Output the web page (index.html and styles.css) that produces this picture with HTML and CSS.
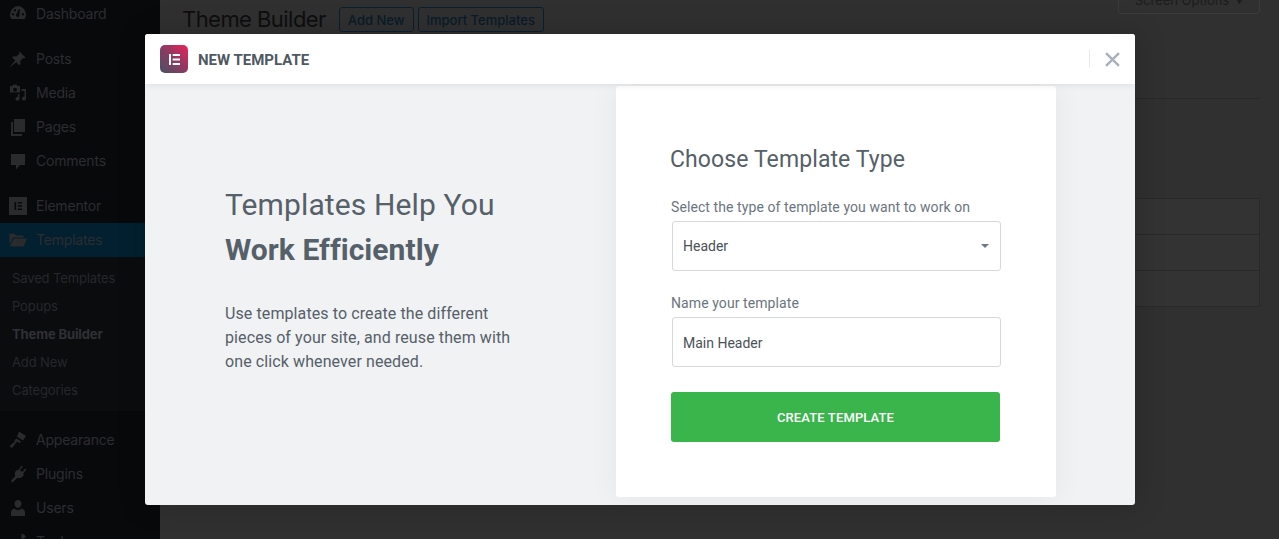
FILE: index.html
```html
<!DOCTYPE html>
<html lang="en">
<head>
<meta charset="utf-8">
<title>Theme Builder</title>
<link rel="stylesheet" href="styles.css">
</head>
<body>
<div class="page">
  <nav class="sidebar">
    <a class="item first"><svg class="ico" viewBox="1 1 18 18"><path d="M10 2a8.500 8.500 0 0 0-8 8.500c0 1.800.6 3.400 1.500 4.500h13c.9-1.100 1.500-2.700 1.500-4.500A8.500 8.500 0 0 0 10 2zM5 11.500a1.200 1.200 0 1 1 0-2.400 1.200 1.200 0 0 1 0 2.400zm2-4a1.200 1.200 0 1 1 0-2.400 1.200 1.200 0 0 1 0 2.400zm4.300 4.600a1.800 1.800 0 1 1-2.700-2.300L11 5h1zM15 11.500a1.200 1.200 0 1 1 0-2.400 1.200 1.200 0 0 1 0 2.400z"/></svg>Dashboard</a>
    <a class="item sep-large"><svg class="ico" viewBox="1 1 18 18"><path d="M11.500 2.500l6 6-1.200.9-1.100-.4-3 3 .3 3-1.200 1.200-3-3L2 18l-.3-.3 5.500-6.300-3-3L5.400 7.200l3 .3 3-3-.4-1.100z"/></svg>Posts</a>
    <a class="item"><svg class="ico" viewBox="1 1 18 18"><path fill-rule="evenodd" d="M2 3h2.500l1-1.500h3L9.500 3H12v6.500H2zm5 1.800a2 2 0 1 0 0 4 2 2 0 0 0 0-4zM13.500 6H18v9.500a2 2 0 1 1-1.500-1.900V8h-3zM11.500 11v4.800a2 2 0 1 1-1.500-1.900V11z"/></svg>Media</a>
    <a class="item"><svg class="ico" viewBox="1 1 18 18"><path d="M6 2h11v13H6zM3 5h2v12h9v2H3z"/></svg>Pages</a>
    <a class="item"><svg class="ico" viewBox="1 1 18 18"><path d="M3 3h14v11h-5l-4 4.500V14H3z"/></svg>Comments</a>
    <a class="item sep-small"><svg class="ico" viewBox="1 1 18 18"><path fill-rule="evenodd" d="M1 1h18v18H1zM6.500 6v8h1.600V6zm3.300 0v1.600h4.200V6zm0 3.200v1.600h4.200V9.200zm0 3.200V14h4.200v-1.600z"/></svg>Elementor</a>
    <a class="item active"><svg class="ico" viewBox="1 1 18 18"><path d="M1 3.500h5.500l1.500 2h7.500v2H5L1.500 15V4zM5.800 8.500H19l-3.500 8H1.800z"/></svg>Templates</a>
    <div class="submenu">
      <a class="subitem">Saved Templates</a>
      <a class="subitem">Popups</a>
      <a class="subitem current">Theme Builder</a>
      <a class="subitem">Add New</a>
      <a class="subitem">Categories</a>
    </div>
    <a class="item sep-after"><svg class="ico" viewBox="1 1 18 18"><path d="M11 1.500l7 4.500-3 4.500-6-3.800zM8.300 8.500l4.800 3-1.500 1.500-2.600-1.600-5 6.500L1.500 16l5.300-4.500-.3-.9z"/></svg>Appearance</a>
    <a class="item"><svg class="ico" viewBox="1 1 18 18"><path d="M13.500 1.500l1.300 1-3 3.500 2.500 2 3-3.500 1.200 1-3.500 4.500 1 .8-1 1.200c-1.500 2-3.500 2.500-5.500 1.700L4.500 18.500 2.800 17l4.500-5c-1-1.700-.7-3.800.8-5.300l1-1 .9.700z"/></svg>Plugins</a>
    <a class="item"><svg class="ico" viewBox="1 1 18 18"><path d="M10 2a3.500 3.500 0 0 1 3.500 3.800c0 2-1.500 4.200-3.500 4.200S6.500 7.800 6.500 5.800A3.500 3.500 0 0 1 10 2zM6.500 10.500c1 1 2.200 1.500 3.500 1.500s2.500-.5 3.500-1.500c2 .6 3.500 2 3.500 4v3.500H3v-3.500c0-2 1.500-3.400 3.500-4z"/></svg>Users</a>
    <a class="item"><svg class="ico" viewBox="1 1 18 18"><path d="M13 2c2.500-.5 4.500 1 5 3l-3 2-2-1 .5-2.500zM13 8l1.500 1L6 18l-3-3z"/></svg>Tools</a>
  </nav>

  <main class="main">
    <div class="screen-meta"><span class="screen-options">Screen Options <i class="screen-caret">▼</i></span></div>
    <div class="title-row">
      <h1 class="page-title">Theme Builder</h1>
      <a class="page-btn">Add New</a>
      <a class="page-btn">Import Templates</a>
    </div>
    <div class="tabs-line"></div>
    <div class="bg-table">
      <div class="bg-row"></div>
      <div class="bg-row"></div>
      <div class="bg-row"></div>
    </div>
  </main>
</div>

<section class="modal">
  <header class="modal-head">
    <div class="logo"><svg class="logo-mark" viewBox="0 0 12 12"><path d="M0 0h2.200v12H0zM4 0h8v2.200H4zM4 4.800h8V7H4zM4 9.800h8V12H4z"/></svg></div>
    <div class="modal-name">NEW TEMPLATE</div>
    <div class="close-wrap"><svg class="close" viewBox="0 0 14 14"><path d="M1 1l12 12M13 1L1 13"/></svg></div>
  </header>
  <div class="modal-body">
    <div class="intro">
      <h2 class="intro-title">Templates Help You <strong class="intro-strong">Work Efficiently</strong></h2>
      <p class="intro-text">Use templates to create the different pieces of your site, and reuse them with one click whenever needed.</p>
    </div>
    <form class="card">
      <h3 class="card-title">Choose Template Type</h3>
      <div class="label label-first">Select the type of template you want to work on</div>
      <div class="field"><span>Header</span><i class="caret"></i></div>
      <div class="label label-second">Name your template</div>
      <div class="field field-text"><span>Main Header</span></div>
      <div class="submit">CREATE TEMPLATE</div>
    </form>
  </div>
</section>
</body>
</html>
```
FILE: styles.css
```css
* { box-sizing: border-box; }
html, body { margin: 0; height: 100%; overflow: hidden; }
body { background: #303030; font-family: Inter, "Liberation Sans", sans-serif; color: #111; }

.page { display: flex; height: 539px; overflow: hidden; }

.sidebar { flex: 0 0 160px; width: 160px; height: 600px; background: #08090b; color: #2c2d2f; font-size: 14px; letter-spacing: -.2px; }
.item { display: flex; align-items: center; height: 34px; padding: 0 0 1px 9px; gap: 9px; }
.item.first { height: 28px; }
.item.sep-large { margin-top: 14px; }
.item.sep-small { margin-top: 11px; }
.item.sep-after { margin-top: 12px; }
.item.active { background: #02202f; }
.ico { width: 18px; height: 18px; flex: none; fill: #2a2b2d; }
.submenu { background: #0b0c0e; padding: 7px 0; font-size: 13px; letter-spacing: -.12px; color: #26272a; }
.subitem { display: flex; align-items: center; height: 28px; padding-left: 12px; }
.subitem.current { font-weight: 700; color: #303133; }

.main { flex: 1; padding: 0 19px 0 22px; min-width: 0; }
.screen-meta { display: flex; justify-content: flex-end; height: 0; }
.screen-options { display: flex; align-items: flex-end; justify-content: center; gap: 6px; flex: none; width: 142px; height: 14px; padding-bottom: 6px; border: 1px solid #3b3b3b; border-top: 0; border-radius: 0 0 4px 4px; font-size: 13px; line-height: 14px; color: #1c1c1c; overflow: hidden; }
.screen-caret { font-style: normal; font-size: 8px; line-height: 12px; }
.title-row { display: flex; align-items: center; height: 39px; gap: 4px; }
.page-title { margin: 0 9px 2px 0; font-size: 22px; font-weight: 400; letter-spacing: -.55px; color: #0e0e0f; }
.page-btn { display: flex; align-items: center; height: 25px; padding: 0 8px; border: 1px solid #062030; border-radius: 3px; font-size: 13px; font-weight: 500; color: #081c29; }
.tabs-line { margin-top: 59px; height: 1px; background: #292929; }
.bg-table { margin-top: 99px; border: 1px solid #292929; border-bottom: 0; }
.bg-row { height: 36px; background: #333; border-bottom: 1px solid #292929; }

.modal { position: absolute; left: 145px; top: 34px; width: 990px; height: 471px; display: flex; flex-direction: column; background: #f1f2f4; border-radius: 3px; box-shadow: 2px 0 30px rgba(0,0,0,.18); font-family: Roboto, "Liberation Sans", sans-serif; overflow: hidden; }
.modal-head { position: relative; z-index: 2; flex: 0 0 50px; display: flex; align-items: center; background: #fff; padding-left: 15px; box-shadow: 0 0 8px rgba(0,0,0,.1); }
.logo { width: 28px; height: 28px; flex: none; display: flex; align-items: center; justify-content: center; border-radius: 5px; background: linear-gradient(45deg, #475264 0%, #8c3a62 50%, #ee2159 100%); }
.logo-mark { width: 11px; height: 11px; fill: #fff; }
.modal-name { margin: 2px 0 0 10px; font-size: 15px; font-weight: 700; color: #4f5962; }
.close-wrap { margin-left: auto; margin-right: 15px; padding-left: 15px; display: flex; align-items: center; height: 18px; border-left: 1px solid #e6e8ea; }
.close { width: 15px; height: 15px; fill: none; stroke: #a8b1b9; stroke-width: 2.2; }

.modal-body { flex: 1; display: flex; min-height: 0; }
.intro { flex: 0 0 471px; padding: 98px 0 0 80px; color: #556068; }
.intro-title { margin: 0; width: 300px; font-size: 30px; line-height: 45px; font-weight: 400; letter-spacing: .12px; }
.intro-strong { display: block; font-weight: 700; letter-spacing: .05px; }
.intro-text { margin: 30px 0 0; width: 300px; font-size: 16px; line-height: 24px; letter-spacing: .1px; }

.card { flex: 0 0 439px; margin-top: 2px; height: 411px; padding: 58px 55px 0; background: #fff; border-radius: 3px; box-shadow: 0 0 30px rgba(0,0,0,.06); color: #556068; }
.card-title { margin: 0 0 0 -1px; font-size: 23px; line-height: 32px; font-weight: 400; letter-spacing: .1px; }
.label { font-size: 14px; line-height: 18px; letter-spacing: .085px; color: #6a7580; }
.label-first { margin-top: 22px; }
.label-second { margin-top: 23px; }
.field { display: flex; align-items: center; justify-content: space-between; width: 329px; height: 50px; margin: 5px 0 0 1px; padding: 0 11px 0 10px; border: 1px solid #d5d8dc; border-radius: 3px; font-size: 14px; color: #495157; }
.field-text { padding-top: 2px; }
.caret { width: 0; height: 0; border-style: solid; border-width: 4px 4.500px 0; border-color: #6d7882 transparent transparent; }
.submit { display: flex; align-items: center; justify-content: center; width: 329px; height: 50px; margin-top: 25px; background: #3ab54c; border-radius: 3px; color: #fff; font-size: 13px; font-weight: 500; letter-spacing: .13px; }
```
